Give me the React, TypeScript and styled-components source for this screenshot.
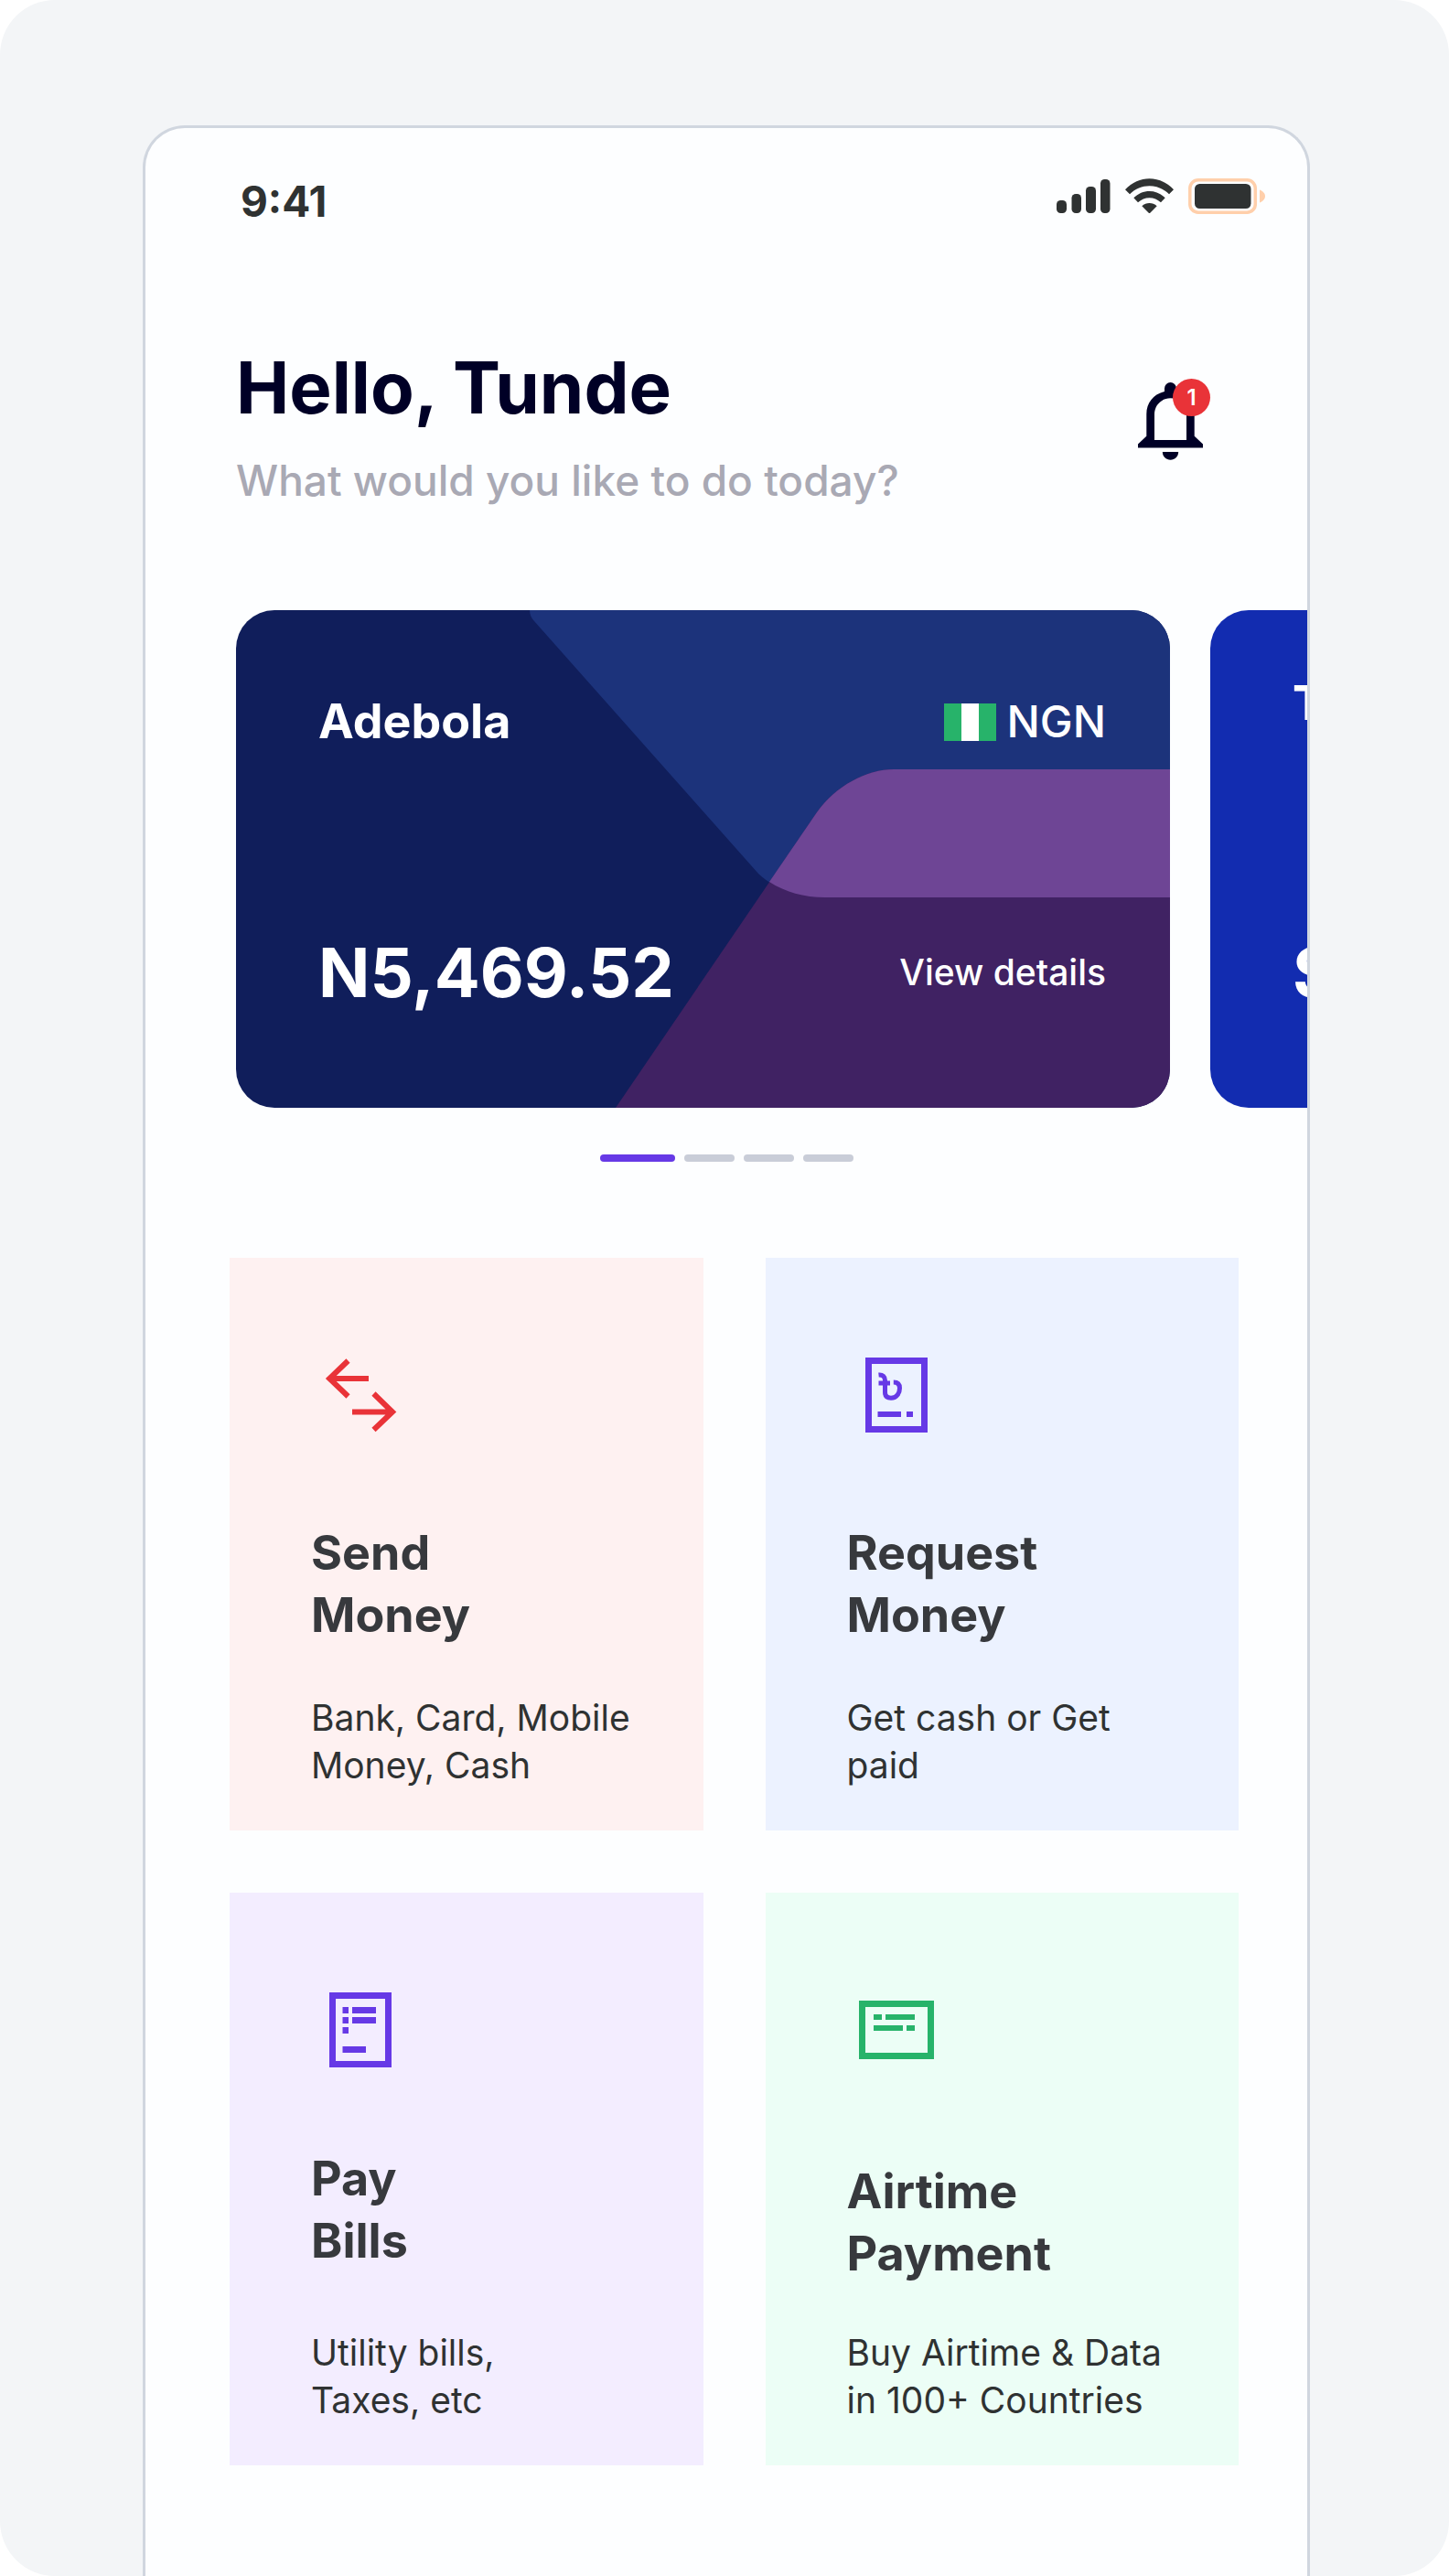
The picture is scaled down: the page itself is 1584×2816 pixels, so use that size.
import React from 'react';
import styled, { createGlobalStyle } from 'styled-components';

const GlobalStyle = createGlobalStyle`
  *, *::before, *::after { box-sizing: border-box; }
  html { background: #ffffff; }
  body {
    margin: 0;
    font-family: Inter, "Liberation Sans", sans-serif;
    color: #2f3232;
  }
  h1, h2, h3, p, ul { margin: 0; padding: 0; }
  button { font: inherit; color: inherit; border: 0; padding: 0; background: none; cursor: pointer; }
`;

const Page = styled.div`
  display: flex;
  min-height: 100vh;
  padding: 137px 152px 0 156px;
  background: #f3f5f7;
  border-radius: 60px;
`;

const Phone = styled.main`
  flex: 1;
  min-width: 0;
  display: flex;
  flex-direction: column;
  overflow: hidden;
  background: #fdfeff;
  border: 3px solid #d0d6df;
  border-bottom: 0;
  border-radius: 46px 46px 0 0;
`;

const StatusBar = styled.div`
  display: flex;
  justify-content: space-between;
  align-items: center;
  height: 76px;
  margin-top: 36px;
  padding: 0 46px 0 104px;
`;

const Clock = styled.time`
  padding-top: 12px;
  font-size: 46px;
  line-height: 56px;
  font-weight: 700;
`;

const StatusIcons = styled.div`
  display: flex;
  gap: 16px;
`;

const Header = styled.header`
  display: flex;
  justify-content: space-between;
  align-items: center;
  margin-top: 124px;
  padding: 0 114px 0 99px;
`;

const Greeting = styled.h1`
  font-size: 78px;
  line-height: 96px;
  font-weight: 700;
  color: #000026;
`;

const Prompt = styled.p`
  margin-top: 25px;
  font-size: 46px;
  line-height: 56px;
  font-weight: 500;
  color: #a9a9b4;
`;

const BellButton = styled.button`
  position: relative;
  display: flex;
  padding-bottom: 8px;
`;

const Badge = styled.span`
  position: absolute;
  top: -4px;
  right: -8px;
  width: 41px;
  height: 41px;
  border-radius: 50%;
  background: #e93338;
  color: #ffffff;
  font-size: 24px;
  line-height: 41px;
  font-weight: 600;
  text-align: center;
`;

const Carousel = styled.section`
  display: flex;
  gap: 44px;
  margin-top: 114px;
  padding-left: 99px;
  overflow: hidden;
`;

const Account = styled.article<{ $color: string; $top: number }>`
  position: relative;
  flex: none;
  display: flex;
  flex-direction: column;
  justify-content: space-between;
  width: 1021px;
  max-width: 88%;
  height: 544px;
  padding: ${(p) => p.$top}px 70px 106px 90px;
  border-radius: 42px;
  overflow: hidden;
  background: ${(p) => p.$color};
  color: #ffffff;
`;

const Artwork = styled.svg`
  position: absolute;
  inset: 0;
  width: 100%;
  height: 100%;
`;

const AccountRow = styled.div`
  position: relative;
  display: flex;
  justify-content: space-between;
  align-items: center;
`;

const AccountName = styled.h2`
  font-size: 52px;
  line-height: 68px;
  font-weight: 700;
`;

const Currency = styled.span`
  display: flex;
  align-items: center;
  gap: 12px;
  font-size: 48px;
  line-height: 68px;
  font-weight: 500;
`;

const Balance = styled.p`
  font-size: 74px;
  line-height: 84px;
  font-weight: 700;
`;

const Details = styled.button`
  font-size: 39px;
  line-height: 52px;
  font-weight: 500;
`;

const Pager = styled.nav`
  display: flex;
  justify-content: center;
  gap: 10px;
  margin-top: 51px;
`;

const PagerBar = styled.button<{ $active?: boolean }>`
  width: ${(p) => (p.$active ? 82 : 55)}px;
  height: 8px;
  border-radius: 4px;
  background: ${(p) => (p.$active ? '#6639e6' : '#c9cdd8')};
`;

const Tiles = styled.section`
  display: grid;
  grid-template-columns: 1fr 1fr;
  gap: 68px;
  margin-top: 105px;
  padding: 0 75px 120px 92px;
`;

const Tile = styled.button<{ $color: string }>`
  display: flex;
  flex-direction: column;
  align-items: flex-start;
  min-height: 626px;
  padding: 109px 20px 45px 89px;
  background: ${(p) => p.$color};
  text-align: left;
`;

const TileIcon = styled.svg`
  width: 82px;
  height: 82px;
  margin-left: 13px;
`;

const TileTitle = styled.span<{ $gap: number }>`
  margin-top: ${(p) => p.$gap}px;
  font-size: 52px;
  line-height: 68px;
  font-weight: 700;
  color: #37393d;
  white-space: pre-line;
`;

const TileText = styled.span`
  margin-top: auto;
  font-size: 39px;
  line-height: 52px;
  white-space: pre-line;
`;

const Signal = () => (
  <svg width="59" height="38" viewBox="0 0 59 38" fill="#2f3232" aria-hidden="true">
    <rect x="0" y="24" width="11" height="14" rx="4.5" />
    <rect x="16.5" y="17" width="10.5" height="21" rx="4.5" />
    <rect x="32" y="9" width="11" height="29" rx="4.5" />
    <rect x="48" y="1" width="10.5" height="37" rx="4.5" />
  </svg>
);

const Wifi = () => (
  <svg width="53" height="38" viewBox="0 0 53 38" fill="#2f3232" aria-hidden="true">
    <path d="M0 12.3C15-3.8 38-3.8 53 12.3L48 17.3C36 5.2 17 5.2 5 17.3Z" />
    <path d="M9.3 21.3C19 11.4 34 11.4 43.7 21.3L39 26.3C32 19.4 21 19.4 14 26.3Z" />
    <path d="M18.3 30.3C23 26 30 26 34.7 30.3L26.5 38.5Z" />
  </svg>
);

const Battery = () => (
  <svg width="84" height="39" viewBox="0 0 84 39" aria-hidden="true">
    <rect x="1.8" y="1.8" width="71.5" height="35.4" rx="9" fill="none" stroke="#ffcfab" strokeWidth="3.5" />
    <rect x="7" y="6" width="61.5" height="27" rx="5.5" fill="#2f3232" />
    <path d="M78 12.5C81.500 14 84 16.500 84 19.500S81.500 25 78 26.500Z" fill="#ffcfab" />
  </svg>
);

const Bell = () => (
  <svg width="71" height="85" viewBox="0 0 71 85" fill="#000026" aria-hidden="true">
    <path
      fillRule="evenodd"
      d="M29 9.900V6.500a6.500 6.500 0 0 1 13 0V9.900C53.500 12.500 61.700 22 61.700 34.500V58.700L71 67.500V71.500H0V67.500L9.300 58.700V34.500C9.300 22 17.500 12.500 29 9.900ZM35.500 17.300C25.500 17.300 18 25 18 35V63H53V35C53 25 45.500 17.300 35.500 17.300Z"
    />
    <path d="M26.800 76H44.200C44.200 81 40.300 84.700 35.500 84.700S26.800 81 26.800 76Z" />
  </svg>
);

const NigeriaFlag = () => (
  <svg width="57" height="41" viewBox="0 0 57 41" role="img" aria-label="Nigeria">
    <rect width="57" height="41" fill="#27b36a" />
    <rect x="19" width="19" height="41" fill="#ffffff" />
  </svg>
);

const SendIcon = () => (
  <g fill="none" stroke="#e93338" strokeWidth="6">
    <path d="M50 23H8M27.500 3.500L7.200 23L27.500 42.500" />
    <path d="M32 59.500H76M55.500 39.500L76 59.500L55.500 79" />
  </g>
);

const RequestIcon = () => (
  <g fill="none" stroke="#6639e6">
    <rect x="10.500" y="3.500" width="61" height="75" strokeWidth="7" />
    <path d="M21.500 19C26 18.500 28.500 21 28.500 25V38C28.500 42.500 31 44.300 35 44.300C41.500 44.300 44.500 38.500 44.500 33.500C44.500 29 42 27 37.800 27M21.500 28H34" strokeWidth="5" />
    <path d="M20.500 62H46M52 62H59" strokeWidth="6" />
  </g>
);

const BillsIcon = () => (
  <g fill="none" stroke="#6639e6">
    <rect x="10.500" y="3.500" width="61" height="75" strokeWidth="7" />
    <path d="M21.500 19.500H28M32 19.500H58M21.500 30.500H28M32 30.500H58M21.500 41.500H28M21.500 62.500H47" strokeWidth="7" />
  </g>
);

const AirtimeIcon = () => (
  <g fill="none" stroke="#27b36a">
    <rect x="3.500" y="12.500" width="75" height="57" strokeWidth="7" />
    <path d="M16 27H25M29 27H61M16 39H48M52 39H61" strokeWidth="6" />
  </g>
);

const tiles = [
  { title: 'Send\nMoney', text: 'Bank, Card, Mobile\nMoney, Cash', color: '#fef1f1', gap: 98, Icon: SendIcon },
  { title: 'Request\nMoney', text: 'Get cash or Get\npaid', color: '#ecf2ff', gap: 98, Icon: RequestIcon },
  { title: 'Pay\nBills', text: 'Utility bills,\nTaxes, etc', color: '#f3edff', gap: 88, Icon: BillsIcon },
  { title: 'Airtime\nPayment', text: 'Buy Airtime & Data\nin 100+ Countries', color: '#ecfef6', gap: 102, Icon: AirtimeIcon },
];

export default function App() {
  return (
    <Page>
      <GlobalStyle />
      <Phone>
        <StatusBar>
          <Clock>9:41</Clock>
          <StatusIcons>
            <Signal />
            <Wifi />
            <Battery />
          </StatusIcons>
        </StatusBar>

        <Header>
          <div>
            <Greeting>Hello, Tunde</Greeting>
            <Prompt>What would you like to do today?</Prompt>
          </div>
          <BellButton aria-label="Notifications">
            <Bell />
            <Badge>1</Badge>
          </BellButton>
        </Header>

        <Carousel aria-label="Accounts">
          <Account $color="#101e5b" $top={88}>
            <Artwork viewBox="0 0 1021 544" preserveAspectRatio="none" aria-hidden="true">
              <path d="M321 0C321 5 323 9 326 12L571 288C590 306 615 314 644 314H1021V0Z" fill="#1c337b" />
              <path d="M415 544L635 221C655 192 690 174 719 174H1021V544Z" fill="#402263" />
              <path d="M583 297L635 221C655 192 690 174 719 174H1021V314H644C621 314 600 308 583 297Z" fill="#6e4595" />
            </Artwork>
            <AccountRow>
              <AccountName>Adebola</AccountName>
              <Currency>
                <NigeriaFlag />
                NGN
              </Currency>
            </AccountRow>
            <AccountRow>
              <Balance>N5,469.52</Balance>
              <Details>View details</Details>
            </AccountRow>
          </Account>
          <Account $color="#122cb0" $top={68}>
            <AccountRow>
              <AccountName>Tunde</AccountName>
            </AccountRow>
            <AccountRow>
              <Balance>$</Balance>
            </AccountRow>
          </Account>
        </Carousel>

        <Pager aria-label="Account pages">
          <PagerBar $active aria-label="Account 1" />
          <PagerBar aria-label="Account 2" />
          <PagerBar aria-label="Account 3" />
          <PagerBar aria-label="Account 4" />
        </Pager>

        <Tiles>
          {tiles.map(({ title, text, color, gap, Icon }) => (
            <Tile key={title} $color={color}>
              <TileIcon viewBox="0 0 82 82" aria-hidden="true">
                <Icon />
              </TileIcon>
              <TileTitle $gap={gap}>{title}</TileTitle>
              <TileText>{text}</TileText>
            </Tile>
          ))}
        </Tiles>
      </Phone>
    </Page>
  );
}
